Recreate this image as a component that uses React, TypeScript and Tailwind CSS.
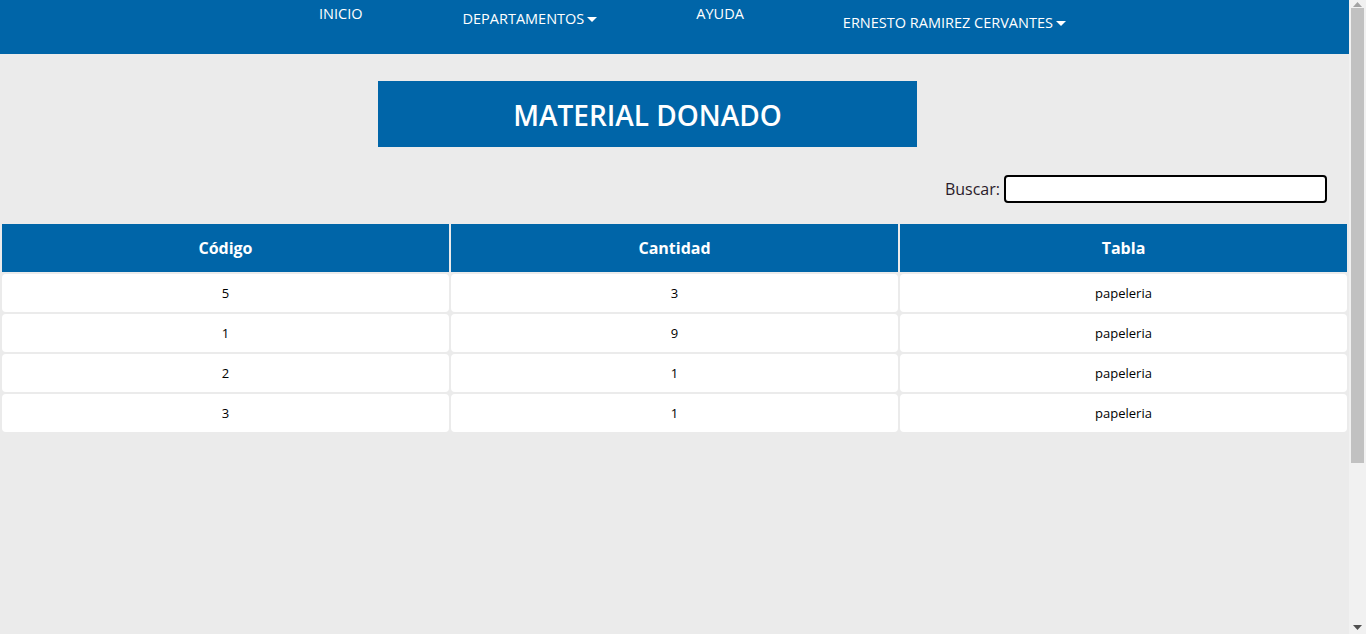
import React from "react";

const rows = [
  ["5", "3", "papeleria"],
  ["1", "9", "papeleria"],
  ["2", "1", "papeleria"],
  ["3", "1", "papeleria"],
];

function Caret() {
  return (
    <svg width="10" height="5" viewBox="0 0 10 5" className="ml-[3px] inline-block">
      <path d="M0 0 L10 0 L5 5 Z" fill="white" />
    </svg>
  );
}

function Scrollbar() {
  return (
    <div className="w-[17px] h-[634px] bg-[#f1f1f1] flex flex-col items-center shrink-0">
      <svg width="9" height="5" viewBox="0 0 9 5" className="mt-[2px]">
        <path d="M0 5 L9 5 L4.5 0 Z" fill="#a3a3a3" />
      </svg>
      <div className="w-[13px] h-[455px] bg-[#c1c1c1] mt-[1px]" />
      <div className="flex-1" />
      <svg width="9" height="5" viewBox="0 0 9 5" className="mb-[4px]">
        <path d="M0 0 L9 0 L4.5 5 Z" fill="#505050" />
      </svg>
    </div>
  );
}

export default function App() {
  return (
    <div className="h-[634px] overflow-hidden flex bg-[#ebebeb] font-['Open_Sans','Noto_Sans',sans-serif]">
      <div className="w-[1349px] shrink-0">
        <nav className="h-[54px] bg-[#0065a8] text-white text-[14.5px] leading-[20px] flex items-start">
          <span className="ml-[319px] mt-[4px]">INICIO</span>
          <span className="ml-[100px] mt-[9px] flex items-center">DEPARTAMENTOS<Caret /></span>
          <span className="ml-[99px] mt-[4px]">AYUDA</span>
          <span className="ml-[99px] mt-[13px] flex items-center">ERNESTO RAMIREZ CERVANTES<Caret /></span>
        </nav>
        <div className="flex mt-[27px] ml-[378px]">
          <div className="w-[539px] h-[66px] bg-[#0065a8] flex items-center justify-center">
            <h1 className="text-white text-[28px] font-semibold mt-[2px]">MATERIAL DONADO</h1>
          </div>
        </div>
        <div className="flex justify-end items-center mt-[28px] pr-[22px]">
          <label className="text-[16px] text-[#2a1a2a] mr-[4px]">Buscar:</label>
          <input className="w-[323px] h-[28px] bg-white border-2 border-black rounded-[4px]" />
        </div>
        <table className="w-full border-separate border-spacing-[2px] mt-[19px]">
          <thead>
            <tr>
              {["Código", "Cantidad", "Tabla"].map((h) => (
                <th key={h} className="h-[48px] w-1/3 bg-[#0065a8] text-white text-[16px] font-bold text-center">
                  {h}
                </th>
              ))}
            </tr>
          </thead>
          <tbody>
            {rows.map((r, i) => (
              <tr key={i}>
                {r.map((c, j) => (
                  <td key={j} className="h-[38px] pt-[2px] bg-white rounded-[4px] text-[13px] text-black text-center">
                    {c}
                  </td>
                ))}
              </tr>
            ))}
          </tbody>
        </table>
      </div>
      <Scrollbar />
    </div>
  );
}
